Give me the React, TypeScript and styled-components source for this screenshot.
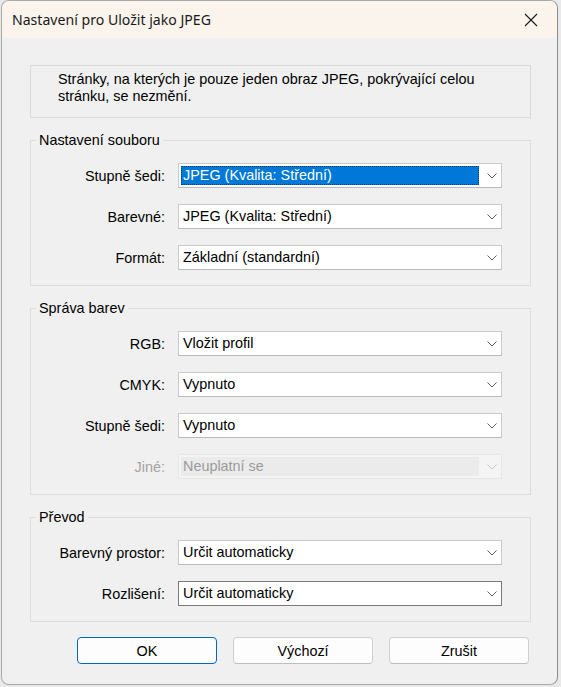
import styled, { createGlobalStyle } from "styled-components";

const GlobalStyle = createGlobalStyle`
    html, body {
        margin: 0;
        padding: 0;
        background: #e9e9e9;
    }
    body {
        font-family: "Liberation Sans", Arial, sans-serif;
        color: #000;
    }
`;

const Window = styled.div`
    box-sizing: border-box;
    width: 557px;
    height: 685px;
    margin-left: 1px;
    border: 1px solid #a9a9a9;
    border-right-color: #8c8c8c;
    border-radius: 8px;
    background: #f0f0f0;
    overflow: hidden;
    display: flex;
    flex-direction: column;
`;

const TitleBar = styled.div`
    flex: none;
    height: 37px;
    background: #faf4ec;
    display: flex;
    align-items: center;
    justify-content: space-between;
    padding-left: 10px;
`;

const Title = styled.span`
    font-family: "Noto Sans", "Open Sans", sans-serif;
    font-size: 14.1px;
    color: #1a1a1a;
`;

const CloseBtn = styled.div`
    width: 46px;
    height: 37px;
    display: flex;
    align-items: center;
    justify-content: center;
    margin-right: 3px;
`;

const Content = styled.div`
    padding: 27px 26px 0 28px;
    display: flex;
    flex-direction: column;
`;

const InfoBox = styled.div`
    box-sizing: border-box;
    height: 53px;
    border: 1px solid #dadada;
    padding: 5px 10px 0 27px;
    font-size: 14.4px;
    line-height: 17px;
`;

const Group = styled.fieldset`
    margin: 14px 0 0;
    padding: 0;
    border: 1px solid #dcdcdc;
    min-width: 0;
`;

const Legend = styled.legend`
    margin-left: 5px;
    padding: 0 3px;
    font-size: 14.4px;
    line-height: 17px;
`;

const Rows = styled.div`
    display: grid;
    grid-template-columns: 134px 324px;
    column-gap: 13px;
    row-gap: 16px;
    padding: 14px 0 15px;
`;

const Label = styled.span<{ $disabled?: boolean }>`
    align-self: center;
    text-align: right;
    font-size: 14.4px;
    color: ${p => (p.$disabled ? "#a3a3a3" : "#000")};
`;

const Combo = styled.div<{ $disabled?: boolean; $hot?: boolean }>`
    box-sizing: border-box;
    height: 25px;
    display: flex;
    align-items: stretch;
    background: ${p => (p.$disabled ? "#f4f4f4" : "#fff")};
    border: 1px solid ${p => (p.$hot ? "#7a7a7a" : p.$disabled ? "#e6e6e6" : "#cacaca")};
    border-bottom-color: ${p => (p.$hot ? "#7a7a7a" : p.$disabled ? "#e6e6e6" : "#b9b9b9")};
`;

const ComboValue = styled.span<{ $selected?: boolean; $disabled?: boolean }>`
    flex: 1;
    box-sizing: border-box;
    margin: 2px 0 2px 2px;
    padding-left: 2px;
    line-height: 19px;
    font-size: 14.4px;
    white-space: nowrap;
    overflow: hidden;
    background: ${p => (p.$selected ? "#0078d7" : p.$disabled ? "#ebebeb" : "transparent")};
    color: ${p => (p.$selected ? "#fff" : p.$disabled ? "#9a9a9a" : "#000")};
    outline: ${p => (p.$selected ? "1px dotted rgba(0, 0, 0, 0.45)" : "none")};
    outline-offset: -1px;
`;

const ComboArrow = styled.span`
    width: 22px;
    flex: none;
    box-sizing: border-box;
    padding-left: 4px;
    display: flex;
    align-items: center;
    justify-content: center;
`;

const ButtonRow = styled.div`
    display: flex;
    justify-content: flex-end;
    gap: 16px;
    margin: 15px 2px 0 0;
`;

const Button = styled.div<{ $primary?: boolean }>`
    box-sizing: border-box;
    width: 140px;
    height: 27px;
    display: flex;
    align-items: center;
    justify-content: center;
    background: #fdfdfd;
    border: 1px solid ${p => (p.$primary ? "#0067c0" : "#d0d0d0")};
    border-bottom-color: ${p => (p.$primary ? "#0067c0" : "#bdbdbd")};
    border-radius: 4px;
    font-size: 14.4px;
`;

const Chevron = ({ color }: { color: string }) => (
    <svg width="10" height="6" viewBox="0 0 10 6">
        <path d="M0.5 0.5 L5 5 L9.5 0.5" fill="none" stroke={color} strokeWidth="1" />
    </svg>
);

type Field = {
    label: string;
    value: string;
    selected?: boolean;
    disabled?: boolean;
    hot?: boolean;
};

const groups: { title: string; fields: Field[] }[] = [
    {
        title: "Nastavení souboru",
        fields: [
            { label: "Stupně šedi:", value: "JPEG (Kvalita: Střední)", selected: true },
            { label: "Barevné:", value: "JPEG (Kvalita: Střední)" },
            { label: "Formát:", value: "Základní (standardní)" },
        ],
    },
    {
        title: "Správa barev",
        fields: [
            { label: "RGB:", value: "Vložit profil" },
            { label: "CMYK:", value: "Vypnuto" },
            { label: "Stupně šedi:", value: "Vypnuto" },
            { label: "Jiné:", value: "Neuplatní se", disabled: true },
        ],
    },
    {
        title: "Převod",
        fields: [
            { label: "Barevný prostor:", value: "Určit automaticky" },
            { label: "Rozlišení:", value: "Určit automaticky", hot: true },
        ],
    },
];

function App() {
    return (
        <>
            <GlobalStyle />
            <Window>
                <TitleBar>
                    <Title>Nastavení pro Uložit jako JPEG</Title>
                    <CloseBtn>
                        <svg width="14" height="14" viewBox="0 0 14 14">
                            <path d="M1 1 L13 13 M13 1 L1 13" stroke="#1a1a1a" strokeWidth="1.1" />
                        </svg>
                    </CloseBtn>
                </TitleBar>
                <Content>
                    <InfoBox>
                        Stránky, na kterých je pouze jeden obraz JPEG, pokrývající celou
                        <br />
                        stránku, se nezmění.
                    </InfoBox>
                    {groups.map(g => (
                        <Group key={g.title}>
                            <Legend>{g.title}</Legend>
                            <Rows>
                                {g.fields.flatMap(f => [
                                    <Label key={f.label + "-l"} $disabled={f.disabled}>{f.label}</Label>,
                                    <Combo key={f.label + "-c"} $disabled={f.disabled} $hot={f.hot}>
                                        <ComboValue $selected={f.selected} $disabled={f.disabled}>
                                            {f.value}
                                        </ComboValue>
                                        <ComboArrow>
                                            <Chevron color={f.disabled ? "#c4c4c4" : "#5f5f5f"} />
                                        </ComboArrow>
                                    </Combo>,
                                ])}
                            </Rows>
                        </Group>
                    ))}
                    <ButtonRow>
                        <Button $primary>OK</Button>
                        <Button>Výchozí</Button>
                        <Button>Zrušit</Button>
                    </ButtonRow>
                </Content>
            </Window>
        </>
    );
}

export default App;
